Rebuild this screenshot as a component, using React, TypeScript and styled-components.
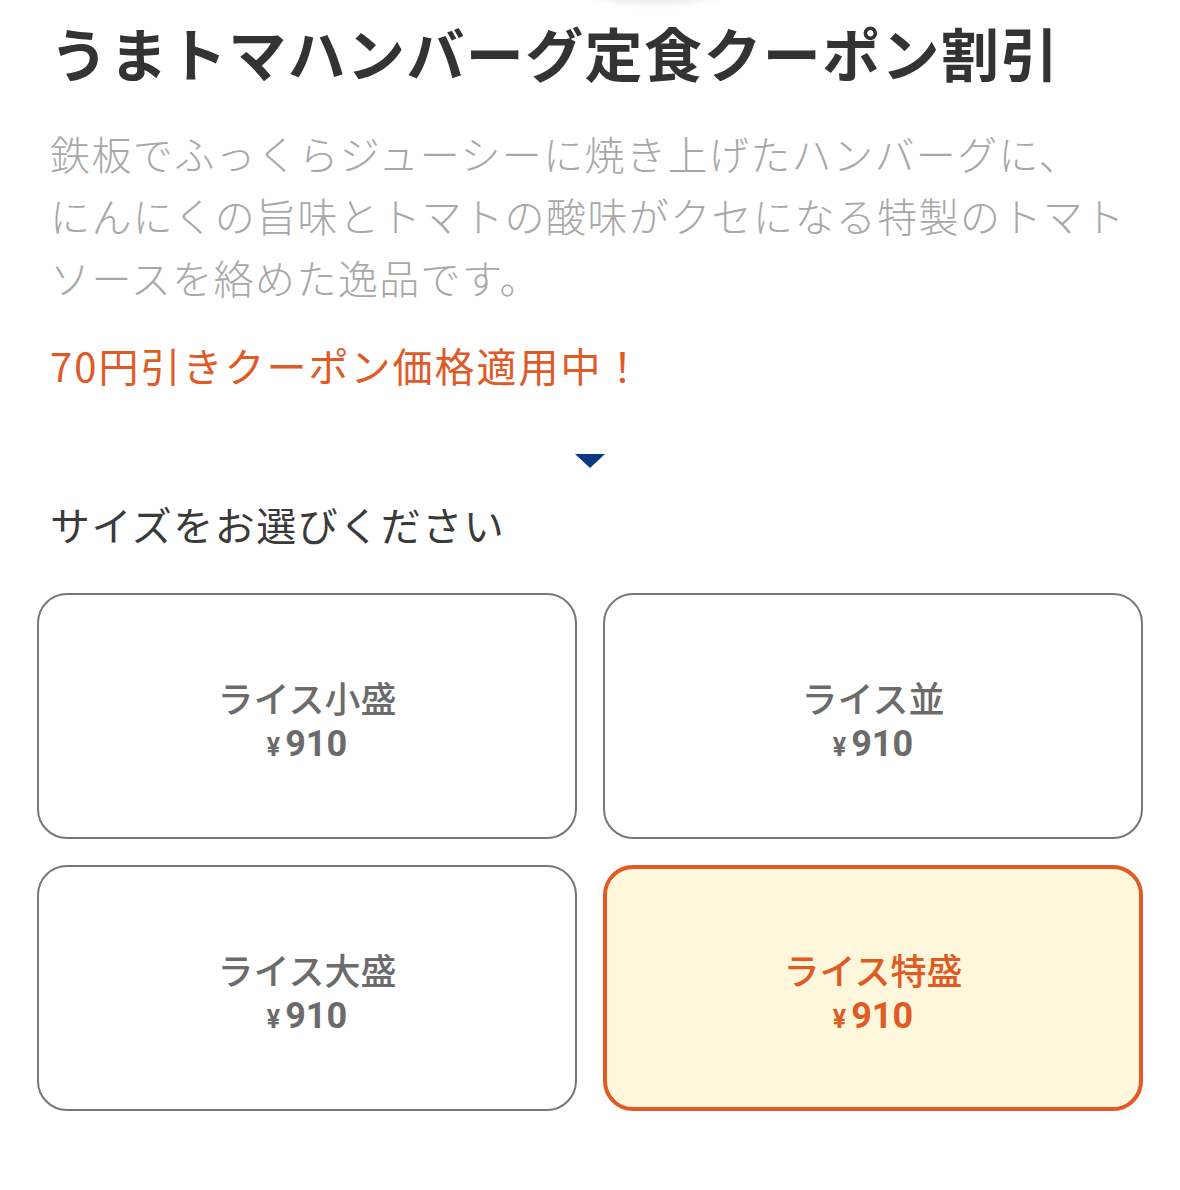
import React, { useState } from "react";
import styled, { createGlobalStyle } from "styled-components";

const GlobalStyle = createGlobalStyle`
  html, body {
    margin: 0;
    padding: 0;
    background: #fff;
  }
  body {
    font-family: "Noto Sans CJK JP", "Noto Sans", sans-serif;
    color: #333;
  }
`;

const Page = styled.div`
  position: relative;
  width: 1180px;
  padding: 10px 50px 0;
  box-sizing: border-box;
`;

const TopShadow = styled.div`
  position: absolute;
  top: -30px;
  left: 585px;
  width: 140px;
  height: 30px;
  border-radius: 50%;
  box-shadow: 0 3px 8px rgba(0, 0, 0, 0.1);
`;

const Title = styled.h1`
  margin: 0;
  font-size: 58px;
  font-weight: 700;
  line-height: 84px;
  color: #333;
  letter-spacing: 1.4px;
  white-space: nowrap;
`;

const Description = styled.p`
  margin: 28px 0 0;
  font-size: 40px;
  font-weight: 300;
  line-height: 62px;
  letter-spacing: 1.4px;
  color: #a8a8a8;
`;

const CouponNote = styled.p`
  margin: 26px 0 0;
  font-size: 40px;
  font-weight: 400;
  line-height: 62px;
  letter-spacing: 2px;
  color: #e05a28;
`;

const ArrowRow = styled.div`
  display: flex;
  justify-content: center;
  margin-top: 58px;
  height: 16px;
`;

const Arrow = styled.span`
  width: 0;
  height: 0;
  border-left: 15px solid transparent;
  border-right: 15px solid transparent;
  border-top: 14px solid #0b3a84;
`;

const SectionLabel = styled.h2`
  margin: 24px 0 0;
  font-size: 40px;
  font-weight: 400;
  line-height: 60px;
  letter-spacing: 1.5px;
  color: #3a3a3a;
`;

const OptionGrid = styled.div`
  display: grid;
  grid-template-columns: 1fr 1fr;
  grid-auto-rows: 246px;
  gap: 26px;
  margin: 39px -13px 0;
`;

const OptionCard = styled.button<{ $selected: boolean }>`
  display: flex;
  flex-direction: column;
  align-items: center;
  justify-content: center;
  gap: 0;
  margin: 0;
  padding: 8px 0 0;
  border-radius: 30px;
  border: ${(p) => (p.$selected ? "4px solid #e05a24" : "2px solid #777")};
  background: ${(p) => (p.$selected ? "#fff7dc" : "#fff")};
  color: ${(p) => (p.$selected ? "#e05a24" : "#6b6b6b")};
  font-family: "Noto Sans CJK JP", "Noto Sans", sans-serif;
  cursor: pointer;
`;

const OptionName = styled.span`
  font-size: 36px;
  font-weight: 500;
  line-height: 52px;
`;

const OptionPrice = styled.span`
  font-family: Roboto, "Liberation Sans", sans-serif;
  font-size: 36px;
  font-weight: 700;
  line-height: 42px;
`;

const Yen = styled.span`
  font-size: 25px;
  margin-right: 5px;
`;

const sizes = [
  { name: "ライス小盛", price: 910 },
  { name: "ライス並", price: 910 },
  { name: "ライス大盛", price: 910 },
  { name: "ライス特盛", price: 910 },
];

export default function App() {
  const [selected, setSelected] = useState(3);

  return (
    <>
      <GlobalStyle />
      <Page>
        <TopShadow />
        <Title>うまトマハンバーグ定食クーポン割引</Title>
        <Description>
          鉄板でふっくらジューシーに焼き上げたハンバーグに、
          <br />
          にんにくの旨味とトマトの酸味がクセになる特製のトマト
          <br />
          ソースを絡めた逸品です。
        </Description>
        <CouponNote>70円引きクーポン価格適用中！</CouponNote>
        <ArrowRow>
          <Arrow />
        </ArrowRow>
        <SectionLabel>サイズをお選びください</SectionLabel>
        <OptionGrid>
          {sizes.map((s, i) => (
            <OptionCard
              key={s.name}
              $selected={selected === i}
              onClick={() => setSelected(i)}
            >
              <OptionName>{s.name}</OptionName>
              <OptionPrice>
                <Yen>¥</Yen>
                {s.price}
              </OptionPrice>
            </OptionCard>
          ))}
        </OptionGrid>
      </Page>
    </>
  );
}
